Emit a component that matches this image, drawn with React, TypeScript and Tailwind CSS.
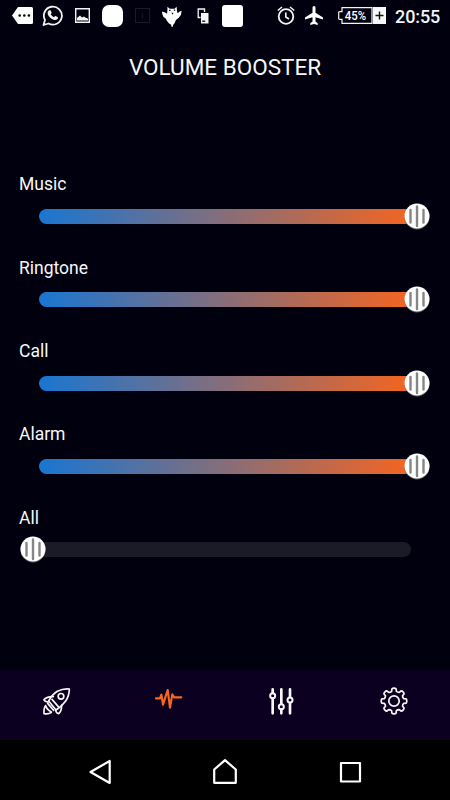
import React from "react";

const channels = [
  { label: "Music", full: true },
  { label: "Ringtone", full: true },
  { label: "Call", full: true },
  { label: "Alarm", full: true },
  { label: "All", full: false },
];

function gearPath() {
  const pts: string[] = [];
  for (let i = 0; i < 8; i++) {
    const c = (i * Math.PI) / 4 - Math.PI / 2;
    const at = (r: number, d: number) =>
      `${(14 + r * Math.cos(c + d)).toFixed(2)} ${(14 + r * Math.sin(c + d)).toFixed(2)}`;
    pts.push(`${i ? "L" : "M"}${at(10, -0.24)}L${at(12.3, -0.17)}Q${at(12.9, -0.1)} ${at(12.8, 0)}Q${at(12.9, 0.1)} ${at(12.3, 0.17)}L${at(10, 0.24)}Q${at(9.2, 0.39)} ${at(10, 0.545)}`);
  }
  return pts.join("") + "Z";
}

function StatusBar() {
  return (
    <header className="flex h-8 shrink-0 items-center text-[#f4f4f4]">
      <svg className="-mt-px ml-3 h-[17px] w-[21px] shrink-0" viewBox="0 0 21 17">
        <path d="M6 0h13.500Q21 0 21 1.500v14q0 1.500-1.500 1.500H6L0 8.500z" fill="#fff" />
        <g fill="#05050f"><circle cx="7.700" cy="8.500" r="1.300" /><circle cx="12.300" cy="8.500" r="1.300" /><circle cx="16.900" cy="8.500" r="1.300" /></g>
      </svg>
      <svg className="-mt-px ml-[9px] h-[21px] w-[21px] shrink-0" viewBox="0 0 20 21">
        <path d="M1 20l1.500-5A9 9 0 1 1 6 18.500z" fill="none" stroke="currentColor" strokeWidth="1.800" strokeLinejoin="round" />
        <path d="M6.200 5.600q1.600-1.200 2.200.3l.7 1.600q.2.500-.9 1.700 1.200 2.200 3.300 3.100 1-1.400 1.500-1.200l2.100 1q.8.400 0 1.900-1.500 1.700-4.100.8Q6.800 13.200 5.200 9q-.5-2 1-3.400z" fill="currentColor" />
      </svg>
      <svg className="-mt-px ml-3 h-[15px] w-[15px] shrink-0" viewBox="0 0 15 15">
        <path d="M.7.700h13.600v13.600H.7z" fill="none" stroke="currentColor" strokeWidth="1.400" />
        <path d="M2 12.500V10L5 7.500l2 2L9 8.500l2 1.500h1l1 1v1.500z" fill="currentColor" />
      </svg>
      <span className="ml-3 h-[22px] w-[21px] shrink-0 rounded-[7px] bg-white" />
      <span className="-mt-px ml-3 flex h-[15px] w-[15px] shrink-0 items-center justify-center border border-[#1c1c20]"><span className="h-1 w-px bg-[#1c1c20]" /></span>
      <svg className="ml-3 h-[21px] w-5 shrink-0" viewBox="98 16 59 62">
        <path d="M114 18l7 6h14l6-6 1 10 1 8q5 1 6-3l7-3-2 12q-6 11-15 15l-4 10-4 4-1 6h-4l-1-6-6-3q-8-9-10-15-8-3-10-13l-1-8 9 3 6 4 1-11z" fill="#fff" />
        <path d="M119 27h4v4h-4zm14-1h4v4h-4zm-7 10h6l-3 6z" fill="#05050f" />
      </svg>
      <svg className="-mt-px ml-[15px] h-4 w-3 shrink-0" viewBox="0 0 12 16">
        <path d="M3.500 9.500H1.200V1h6.300v3" fill="none" stroke="currentColor" strokeWidth="1.300" />
        <path d="M4 5h7.500v10.500H4z" fill="currentColor" />
        <path d="M5.200 13.200h3" stroke="#05050f" strokeWidth="1.300" />
      </svg>
      <span className="ml-[13px] h-[22px] w-[21px] shrink-0 rounded-[3px] bg-white" />
      <svg className="-mt-px ml-[34px] h-[19px] w-[18px] shrink-0" viewBox="0 0 18 19" fill="none" stroke="currentColor">
        <circle cx="9" cy="10.500" r="7.300" strokeWidth="1.800" />
        <path d="M.8 4.500L5 1M17.200 4.500L13 1M8.800 6.500v4.500l3.200 2" strokeWidth="1.600" />
      </svg>
      <svg className="-mt-px ml-2.5 h-[19px] w-[18px] shrink-0" viewBox="0 0 18 19">
        <path d="M9 0q1.500 0 1.500 1.800v5L18 11.500v2l-7.500-2.300v4.400l2.200 1.700V19L9 18l-3.700 1v-1.700l2.200-1.700v-4.400L0 13.500v-2l7.500-4.700v-5Q7.500 0 9 0z" fill="#fff" />
      </svg>
      <svg className="-mt-px ml-[15px] h-[17px] w-12 shrink-0" viewBox="0 0 48 17">
        <path d="M34 .7H4v4H1.500q-.8 0-.8.800v6q0 .8.800.8H4v4h30z" fill="none" stroke="currentColor" strokeWidth="1.200" />
        <path d="M35 0h13v17H35z" fill="#f7f7f7" />
        <path d="M41.500 4.500v8M37.500 8.500h8" stroke="#111118" strokeWidth="1.400" />
        <text transform="translate(6.800 13) scale(.88 1)" fontFamily="Roboto, sans-serif" fontSize="13" fontWeight="500" fill="#fff">45%</text>
      </svg>
      <span className="ml-[9px] pt-px text-[18px] leading-none font-medium tracking-[-0.1px]">20:55</span>
    </header>
  );
}

function Slider({ label, full }: { label: string; full: boolean }) {
  return (
    <section className="flex h-[83.35px] flex-col">
      <h2 className="h-[30px] pl-[19px] text-[17.5px] leading-[22px]">{label}</h2>
      <div className={`flex h-[26px] items-center ${full ? "pl-[38.5px]" : "pl-5"}`}>
        {full && <div className="h-[15px] w-[369px] rounded-l-full bg-linear-to-r/srgb from-[#1976d2] to-[#f26522]" />}
        <svg className={`z-10 h-[27px] w-[26px] shrink-0 ${full ? "-ml-[3.5px]" : "-ml-[0.3px]"}`} viewBox="0 0 26 27">
          <circle cx="13" cy="14" r="12.500" fill="#5d5d60" />
          <circle cx="13" cy="13" r="12.500" fill="#fff" />
          <path d="M6.500 7v12.500M13 3.500v19.500M19.500 7v12.500" stroke="#858585" strokeWidth="2.400" strokeLinecap="round" />
        </svg>
        {!full && <div className="-ml-1 h-[15px] w-[369px] rounded-r-full bg-[#1b1b28]" />}
      </div>
    </section>
  );
}

export default function App() {
  return (
    <div className="flex h-[800px] w-[450px] flex-col overflow-hidden bg-[#00000f] font-['Roboto',sans-serif] text-[#f7f7f7]">
      <StatusBar />
      <h1 className="mt-[21px] h-7 text-center text-[22.5px] leading-7">VOLUME BOOSTER</h1>
      <main className="flex flex-1 flex-col pt-[92.400px]">
        {channels.map((channel) => <Slider key={channel.label} {...channel} />)}
      </main>
      <nav className="grid h-[70px] shrink-0 grid-cols-4 justify-items-center bg-[#0c0020] pt-[17px]">
        <svg className="h-[29px] w-[29px]" viewBox="66 51 87 87" fill="none" stroke="currentColor" strokeWidth="5" strokeLinejoin="round" strokeLinecap="round">
          <path d="M86 93Q97 73 112 64Q130 55 148 57Q148 77 137 93Q125 110 108 120Z" />
          <circle cx="123" cy="79" r="8.500" />
          <path d="M100 80Q82 79 72 89Q73 95 85 96M125 105Q125 123 116 131Q108 130 107 120M96 88L115 110M83 100L101 121" />
          <path d="M77 107Q71 113 72 131Q87 133 94 127M77 107Q80 118 94 126" />
        </svg>
        <svg className="h-[29px] w-[29px]" viewBox="402 51 87 87" fill="none" stroke="#f86620" strokeWidth="6.500" strokeLinejoin="round" strokeLinecap="round">
          <path d="M408 85H420L424 74L429 104L443 60L450 113L457 73L462 82H484" />
        </svg>
        <svg className="h-[29px] w-[29px]" viewBox="51 51 87 87" fill="none" stroke="currentColor" strokeWidth="8" strokeLinecap="round">
          <path d="M68 58V69M68 86V130M94 58V101M94 119V130M120 58V81M120 99V130" />
          <g strokeWidth="6"><circle cx="68" cy="77" r="7.500" /><circle cx="94" cy="110" r="7.500" /><circle cx="120" cy="90" r="7.500" /></g>
        </svg>
        <svg className="h-7 w-7" viewBox="0 0 28 28" fill="none" stroke="currentColor" strokeWidth="1.700" strokeLinejoin="round">
          <path d={gearPath()} /><circle cx="14" cy="14" r="5.200" />
        </svg>
      </nav>
      <footer className="flex h-[60px] shrink-0 items-center justify-between bg-black pr-[88px] pl-[88px] pt-1">
        <svg className="h-[26px] w-6" viewBox="0 0 24 26" fill="none" stroke="white" strokeWidth="2.200" strokeLinejoin="round"><path d="M2.500 13L21.700 2V24Z" /></svg>
        <svg className="h-[26px] w-6" viewBox="0 0 24 26" fill="none" stroke="white" strokeWidth="2.200" strokeLinejoin="round"><path d="M1.200 10.500L12 1.200L22.800 10.500V23.800H1.200Z" /></svg>
        <svg className="h-[26px] w-6" viewBox="0 0 24 26" fill="none" stroke="white" strokeWidth="2.200" strokeLinejoin="round"><path d="M3 4H22V22.500H3Z" /></svg>
      </footer>
    </div>
  );
}
